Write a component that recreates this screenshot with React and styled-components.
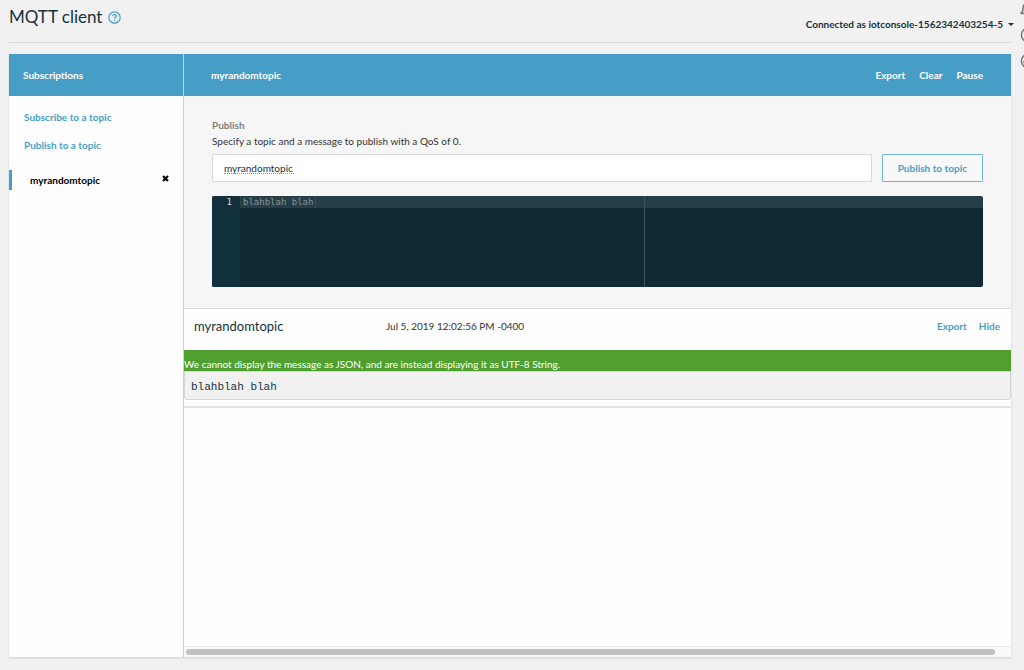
import React, { useState } from 'react';
import styled, { createGlobalStyle } from 'styled-components';

const GlobalStyle = createGlobalStyle`
    * {
        box-sizing: border-box;
    }
    body {
        margin: 0;
        background-color: #f1f1f1;
        color: #16191f;
        font-family: Lato, 'Open Sans', sans-serif;
        font-size: 10px;
        line-height: 16px;
    }
    button, input, textarea {
        font: inherit;
        margin: 0;
    }
    h1, h2, h3, p, pre {
        margin: 0;
    }
`

const Page = styled.div`
    display: flex;
    min-height: 100vh;
    overflow: hidden;
`

const Main = styled.main`
    flex: 1;
    min-width: 0;
    display: flex;
    flex-direction: column;
    padding: 0 0 13px 9px;
`

const Rail = styled.aside`
    flex: none;
    width: 4px;
    margin-left: 9px;
    padding-top: 1px;
    overflow: hidden;
    display: flex;
    flex-direction: column;
    gap: 10px;
    svg {
        flex: none;
        display: block;
    }
`

const PageHeader = styled.header`
    display: flex;
    align-items: center;
    height: 43px;
    padding-bottom: 8px;
    border-bottom: 1px solid #d9d9d9;
    h1 {
        color: #16323d;
        font-size: 17px;
        font-weight: 400;
        line-height: 24px;
    }
`

const HelpButton = styled.button`
    display: flex;
    margin-left: 6px;
    padding: 0;
    border: 0;
    background: none;
    cursor: pointer;
`

const ConnectionMenu = styled.button`
    display: flex;
    align-items: center;
    gap: 5px;
    margin: 14px -3px 0 auto;
    padding: 0;
    border: 0;
    background: none;
    color: #16323d;
    font-weight: 700;
    cursor: pointer;
`

const Caret = styled.span`
    border: 3px solid transparent;
    border-top-color: #16323d;
    border-bottom: 0;
`

const Card = styled.div`
    flex: 1;
    display: grid;
    grid-template-columns: 175px minmax(0, 1fr);
    margin-top: 11px;
    background-color: #fefefe;
    box-shadow: 0 1px 2px rgba(0, 0, 0, 0.15);
`

const Sidebar = styled.nav`
    border-right: 1px solid #d0d0d0;
`

const Bar = styled.div`
    display: flex;
    align-items: center;
    gap: 14px;
    height: 42px;
    padding: 0 28px 1px ${props => props.$inset}px;
    background-color: #469ec7;
    color: #fff;
    h2 {
        flex: 1;
        font-size: 10px;
        font-weight: 700;
    }
`

const TextButton = styled.button`
    padding: 0;
    border: 0;
    background: none;
    color: ${props => props.$color || '#469ec7'};
    font-weight: 700;
    cursor: pointer;
`

const SideLinks = styled.div`
    display: flex;
    flex-direction: column;
    align-items: flex-start;
    gap: 12px;
    padding: 13px 15px 17px;
    a {
        color: #469ec7;
        font-weight: 700;
        text-decoration: none;
    }
`

const Subscription = styled.div`
    display: flex;
    align-items: center;
    justify-content: space-between;
    height: 20px;
    padding: 0 14px 0 18px;
    border-left: 3px solid #469ec7;
    color: #000;
    font-weight: 700;
`

const CloseButton = styled.button`
    display: flex;
    padding: 0 0 4px;
    border: 0;
    background: none;
    cursor: pointer;
`

const Content = styled.section`
    display: flex;
    flex-direction: column;
`

const PublishForm = styled.form`
    padding: 22px 28px 21px;
    border-bottom: 1px solid #d9d9d9;
    background-color: #f6f6f6;
    h3 {
        color: #808080;
        font-size: 10px;
        font-weight: 700;
        line-height: 15px;
    }
    p {
        color: #333;
    }
`

const PublishRow = styled.div`
    display: flex;
    gap: 10px;
    margin: 5px 0 14px;
`

const TopicField = styled.div`
    position: relative;
    flex: 1;
    min-width: 0;
`

const TopicInput = styled.input`
    display: block;
    width: 100%;
    height: 28px;
    padding: 0 11px;
    border: 1px solid #d9d9d9;
    border-radius: 1px;
    background-color: #fff;
    color: #16323d;
    outline: 0;
`

const SpellingMark = styled.i`
    position: absolute;
    left: 12px;
    top: 19px;
    width: 70px;
    border-bottom: 1px dotted #f06a60;
    pointer-events: none;
`

const PublishButton = styled.button`
    flex: none;
    height: 28px;
    padding: 0 15px;
    border: 1px solid #71b5d5;
    border-radius: 1px;
    background-color: #f8f8f8;
    color: #469ec7;
    font-weight: 700;
    cursor: pointer;
`

const Editor = styled.div`
    position: relative;
    display: flex;
    height: 91px;
    border-radius: 2px;
    overflow: hidden;
    background: linear-gradient(#263e48 12px, #0f2a35 12px);
    font-family: 'DejaVu Sans Mono', monospace;
    font-size: 9px;
    line-height: 12px;
`

const Gutter = styled.div`
    width: 28px;
    padding-right: 8px;
    background: linear-gradient(#142f3b 12px, #12313e 12px);
    color: #d5dde0;
    text-align: right;
`

const EditorText = styled.textarea`
    flex: 1;
    padding: 0 3px;
    border: 0;
    background: none;
    color: #87938f;
    resize: none;
    outline: 0;
`

const PrintMargin = styled.i`
    position: absolute;
    top: 0;
    bottom: 0;
    left: 56%;
    width: 1px;
    background-color: #3c545e;
`

const Cursor = styled.i`
    position: absolute;
    top: 0;
    left: 103px;
    width: 1px;
    height: 12px;
    background-color: #703a40;
`

const MessageHeader = styled.div`
    display: flex;
    align-items: center;
    gap: 12px;
    height: 41px;
    padding: 0 11px 7px 10px;
    h3 {
        width: 180px;
        color: #16323d;
        font-size: 13px;
        font-weight: 400;
    }
    time {
        flex: 1;
        color: #333;
    }
`

const Notice = styled.p`
    height: 21px;
    padding-top: 6px;
    background-color: #519f2e;
    color: #fff;
`

const Payload = styled.pre`
    padding: 7px 6px 4px;
    border: 1px solid #d5d5d5;
    border-radius: 0 0 3px 3px;
    background-color: #f1f1f1;
    color: #16323d;
    font-family: 'Liberation Mono', monospace;
    font-size: 11px;
    line-height: 16px;
`

const Message = styled.article`
    padding-bottom: 6px;
    border-bottom: 2px solid #e4e4e4;
`

const ScrollTrack = styled.div`
    margin-top: auto;
    padding: 2px 16px 2px 2px;
    border-top: 1px solid #e8e8e8;
    background-color: #fafafa;
`

const ScrollThumb = styled.div`
    height: 6px;
    border-radius: 3px;
    background-color: #c1c1c1;
`

const HelpIcon = () => (
    <svg width="13" height="13" viewBox="0 0 13 13" fill="none" stroke="#469ec7">
        <circle cx="6.5" cy="6.5" r="5.7" strokeWidth="1.2" />
        <path d="M4.7 5.2c0-2.4 3.6-2.3 3.6-.2 0 1.3-1.8 1.4-1.8 2.8" strokeWidth="1.3" />
        <path d="M6.5 8.8v1.2" strokeWidth="1.3" />
    </svg>
)

const CloseIcon = () => (
    <svg width="7" height="7" viewBox="0 0 7 7" stroke="#000" strokeWidth="2.2">
        <path d="M1 1l5 5M6 1L1 6" />
    </svg>
)

const BellIcon = () => (
    <svg width="16" height="16" viewBox="0 0 16 16" fill="none" stroke="#777" strokeWidth="1.5">
        <path d="M.6 12.4h14.8c-1.8-.8-2.4-2-2.4-4.4 0-4-1.6-6-5-6s-5 2-5 6c0 2.4-.6 3.6-2.4 4.4z" />
    </svg>
)

const CircleIcon = ({ children }) => (
    <svg width="16" height="16" viewBox="0 0 16 16" fill="none" stroke="#777" strokeWidth="1.5">
        <circle cx="8" cy="8" r="6.6" />
        {children}
    </svg>
)

function App() {
    const [topic, setTopic] = useState('myrandomtopic');
    const [message, setMessage] = useState('blahblah blah ');

    return (
        <Page>
            <GlobalStyle />
            <Main>
                <PageHeader>
                    <h1>MQTT client</h1>
                    <HelpButton type="button" aria-label="Help"><HelpIcon /></HelpButton>
                    <ConnectionMenu type="button">
                        Connected as iotconsole-1562342403254-5
                        <Caret />
                    </ConnectionMenu>
                </PageHeader>
                <Card>
                    <Sidebar>
                        <Bar $inset={14}><h2>Subscriptions</h2></Bar>
                        <SideLinks>
                            <a href="#subscribe">Subscribe to a topic</a>
                            <a href="#publish">Publish to a topic</a>
                        </SideLinks>
                        <Subscription>
                            myrandomtopic
                            <CloseButton type="button" aria-label="Unsubscribe"><CloseIcon /></CloseButton>
                        </Subscription>
                    </Sidebar>
                    <Content>
                        <Bar $inset={27}>
                            <h2>myrandomtopic</h2>
                            <TextButton type="button" $color="#fff">Export</TextButton>
                            <TextButton type="button" $color="#fff">Clear</TextButton>
                            <TextButton type="button" $color="#fff">Pause</TextButton>
                        </Bar>
                        <PublishForm onSubmit={e => e.preventDefault()}>
                            <h3>Publish</h3>
                            <p id="hint">Specify a topic and a message to publish with a QoS of 0.</p>
                            <PublishRow>
                                <TopicField>
                                    <TopicInput aria-labelledby="hint" spellCheck={false} value={topic} onChange={e => setTopic(e.target.value)} />
                                    {topic === 'myrandomtopic' && <SpellingMark />}
                                </TopicField>
                                <PublishButton>Publish to topic</PublishButton>
                            </PublishRow>
                            <Editor>
                                <Gutter>1</Gutter>
                                <EditorText aria-label="Message" spellCheck={false} value={message} onChange={e => setMessage(e.target.value)} />
                                <PrintMargin />
                                <Cursor />
                            </Editor>
                        </PublishForm>
                        <Message>
                            <MessageHeader>
                                <h3>myrandomtopic</h3>
                                <time>Jul 5, 2019 12:02:56 PM -0400</time>
                                <TextButton type="button">Export</TextButton>
                                <TextButton type="button">Hide</TextButton>
                            </MessageHeader>
                            <Notice>We cannot display the message as JSON, and are instead displaying it as UTF-8 String.</Notice>
                            <Payload>blahblah blah</Payload>
                        </Message>
                        <ScrollTrack aria-hidden="true"><ScrollThumb /></ScrollTrack>
                    </Content>
                </Card>
            </Main>
            <Rail>
                <BellIcon />
                <CircleIcon />
                <CircleIcon><path d="M3 9h4" /></CircleIcon>
            </Rail>
        </Page>
    )
}

export default App;
